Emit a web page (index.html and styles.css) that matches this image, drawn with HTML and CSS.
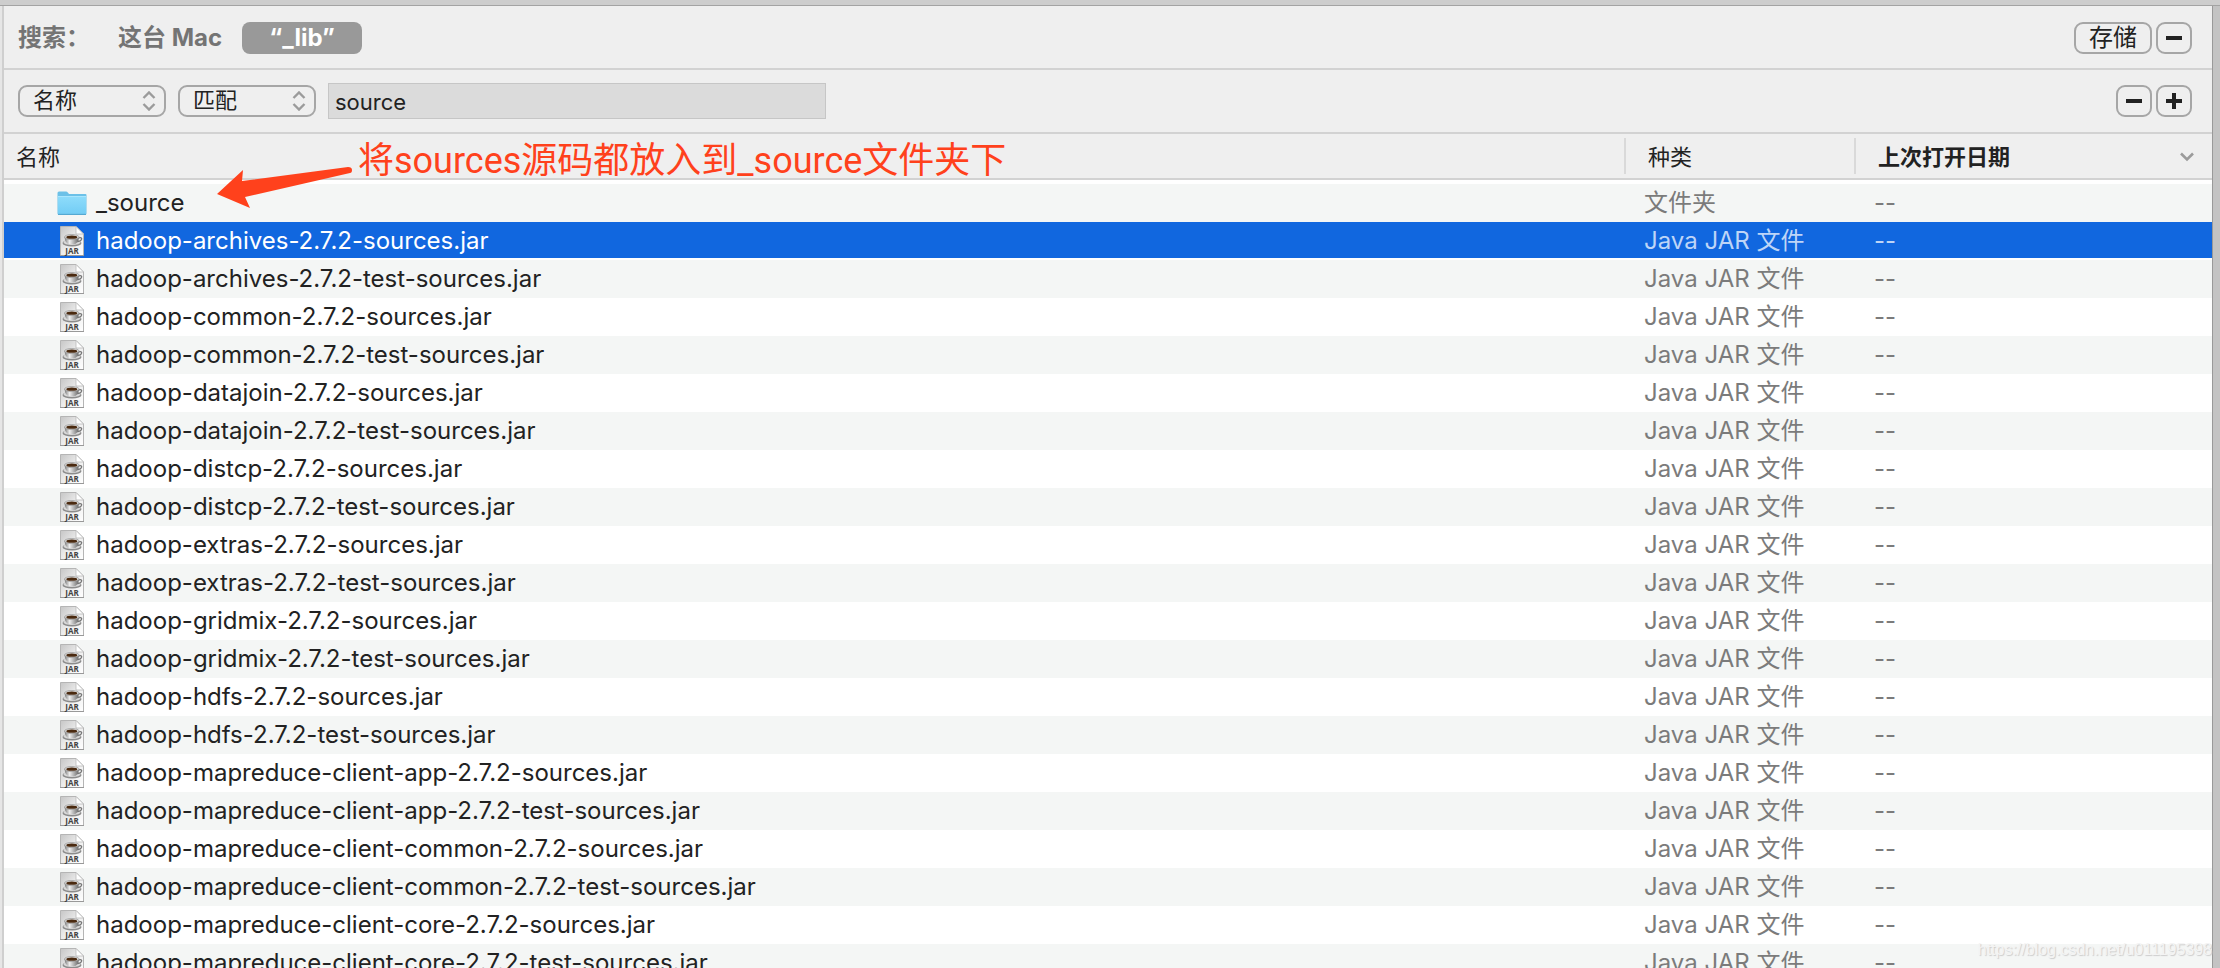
FILE: index.html
```html
<!DOCTYPE html>
<html lang="zh-CN">
<head>
  <meta charset="UTF-8">
  <meta name="viewport" content="width=device-width, initial-scale=1.0">
  <title>_lib</title>
  <link rel="stylesheet" href="styles.css">
</head>
<body>

  <!-- 图标 -->
  <svg class="icons" width="0" height="0">
    <defs>
      <linearGradient id="paper" x1="0" y1="0" x2="1" y2="1">
        <stop offset="0" stop-color="#c6c6c6"/>
        <stop offset=".5" stop-color="#ececec"/>
        <stop offset="1" stop-color="#fff"/>
      </linearGradient>
      <linearGradient id="cup" x1="0" y1="0" x2="1" y2="0">
        <stop offset="0" stop-color="#777"/>
        <stop offset=".35" stop-color="#eee"/>
        <stop offset="1" stop-color="#666"/>
      </linearGradient>
      <linearGradient id="blue" x1="0" y1="0" x2="0" y2="1">
        <stop offset="0" stop-color="#8edcfb"/>
        <stop offset="1" stop-color="#73cdf5"/>
      </linearGradient>
    </defs>
    <symbol id="folder" viewBox="0 0 30 30">
      <path d="M.5 5Q.5 3.500 2 3.500H9Q10 3.500 11 4.800L12 6H28.500Q29.500 6 29.500 7V25.500Q29.500 26.500 28.500 26.500H1.500Q.5 26.500 .5 25.500Z" fill="#6cc1e8"/>
      <path d="M1 8.500H29V25.500H1Z" fill="url(#blue)"/>
      <path d="M1 8.500H29" stroke="#a9e6fd"/>
      <path d="M1 26.500H29" stroke="#55a9d2"/>
    </symbol>
    <symbol id="jar" viewBox="0 0 30 30">
      <path d="M3.500 .5H19L26.500 8V29.500H3.500Z" fill="url(#paper)" stroke="#b5b5b5"/>
      <path d="M19 .5V8H26.500Z" fill="#fff" stroke="#b9b9b9" stroke-width=".8"/>
      <path d="M3 29.500H27" stroke="#999"/>
      <ellipse cx="15" cy="17" rx="9.500" ry="3.600" fill="#8b8b8b"/>
      <ellipse cx="15" cy="16.300" rx="8.500" ry="2.800" fill="#d8d8d8"/>
      <path d="M21 12Q25.500 11 24.500 13.500Q23.500 15.500 20 15.500" fill="none" stroke="#777" stroke-width="1.300"/>
      <path d="M7.500 11Q8 18 13 18.300H16.500Q21.500 18 22 11Z" fill="url(#cup)"/>
      <ellipse cx="14.800" cy="11" rx="7.300" ry="2.500" fill="#ddd" stroke="#888" stroke-width=".6"/>
      <ellipse cx="14.800" cy="11.200" rx="5.500" ry="1.600" fill="#4a2a10"/>
      <text x="15" y="28" class="jar-text">JAR</text>
    </symbol>
    <symbol id="updown" viewBox="0 0 14 20">
      <path d="M1.500 7L7 1.500L12.500 7M1.500 13L7 18.500L12.500 13" fill="none" stroke="#9b9b9b" stroke-width="2.400"/>
    </symbol>
  </svg>

  <div class="titlebar"></div>
  <div class="wrap">
    <div class="window">

      <div class="bar scope">
        <span class="label">搜索：</span>
        <button class="place">这台 Mac</button>
        <button class="place active">“_lib”</button>
        <div class="right">
          <button class="btn save">存储</button>
          <button class="btn" aria-label="删除"><svg width="16" height="16"><path d="M0 8H16" stroke="#222" stroke-width="4"/></svg></button>
        </div>
      </div>

      <div class="bar filter">
        <div class="select">
          <select class="attr" aria-label="属性"><option>名称</option></select>
          <svg><use href="#updown"/></svg>
        </div>
        <div class="select">
          <select class="match" aria-label="条件"><option>匹配</option></select>
          <svg><use href="#updown"/></svg>
        </div>
        <input class="keyword" type="text" value="source" aria-label="关键字">
        <div class="right">
          <button class="btn" aria-label="减少条件"><svg width="16" height="16"><path d="M0 8H16" stroke="#222" stroke-width="4"/></svg></button>
          <button class="btn" aria-label="增加条件"><svg width="16" height="16"><path d="M0 8H16M8 0V16" stroke="#222" stroke-width="4"/></svg></button>
        </div>
      </div>

      <table class="list">
        <thead>
          <tr>
            <th class="name"><div>名称</div></th>
            <th class="kind"><div>种类</div></th>
            <th class="date"><div>上次打开日期<svg width="14" height="10"><path d="M1 1.500L7 7.500L13 1.500" fill="none" stroke="#9b9b9b" stroke-width="2.600"/></svg></div></th>
          </tr>
        </thead>
        <tbody>
          <tr><td><div><svg><use href="#folder"/></svg>_source</div></td><td>文件夹</td><td>--</td></tr>
          <tr class="selected"><td><div><svg><use href="#jar"/></svg>hadoop-archives-2.7.2-sources.jar</div></td><td>Java JAR 文件</td><td>--</td></tr>
          <tr><td><div><svg><use href="#jar"/></svg>hadoop-archives-2.7.2-test-sources.jar</div></td><td>Java JAR 文件</td><td>--</td></tr>
          <tr><td><div><svg><use href="#jar"/></svg>hadoop-common-2.7.2-sources.jar</div></td><td>Java JAR 文件</td><td>--</td></tr>
          <tr><td><div><svg><use href="#jar"/></svg>hadoop-common-2.7.2-test-sources.jar</div></td><td>Java JAR 文件</td><td>--</td></tr>
          <tr><td><div><svg><use href="#jar"/></svg>hadoop-datajoin-2.7.2-sources.jar</div></td><td>Java JAR 文件</td><td>--</td></tr>
          <tr><td><div><svg><use href="#jar"/></svg>hadoop-datajoin-2.7.2-test-sources.jar</div></td><td>Java JAR 文件</td><td>--</td></tr>
          <tr><td><div><svg><use href="#jar"/></svg>hadoop-distcp-2.7.2-sources.jar</div></td><td>Java JAR 文件</td><td>--</td></tr>
          <tr><td><div><svg><use href="#jar"/></svg>hadoop-distcp-2.7.2-test-sources.jar</div></td><td>Java JAR 文件</td><td>--</td></tr>
          <tr><td><div><svg><use href="#jar"/></svg>hadoop-extras-2.7.2-sources.jar</div></td><td>Java JAR 文件</td><td>--</td></tr>
          <tr><td><div><svg><use href="#jar"/></svg>hadoop-extras-2.7.2-test-sources.jar</div></td><td>Java JAR 文件</td><td>--</td></tr>
          <tr><td><div><svg><use href="#jar"/></svg>hadoop-gridmix-2.7.2-sources.jar</div></td><td>Java JAR 文件</td><td>--</td></tr>
          <tr><td><div><svg><use href="#jar"/></svg>hadoop-gridmix-2.7.2-test-sources.jar</div></td><td>Java JAR 文件</td><td>--</td></tr>
          <tr><td><div><svg><use href="#jar"/></svg>hadoop-hdfs-2.7.2-sources.jar</div></td><td>Java JAR 文件</td><td>--</td></tr>
          <tr><td><div><svg><use href="#jar"/></svg>hadoop-hdfs-2.7.2-test-sources.jar</div></td><td>Java JAR 文件</td><td>--</td></tr>
          <tr><td><div><svg><use href="#jar"/></svg>hadoop-mapreduce-client-app-2.7.2-sources.jar</div></td><td>Java JAR 文件</td><td>--</td></tr>
          <tr><td><div><svg><use href="#jar"/></svg>hadoop-mapreduce-client-app-2.7.2-test-sources.jar</div></td><td>Java JAR 文件</td><td>--</td></tr>
          <tr><td><div><svg><use href="#jar"/></svg>hadoop-mapreduce-client-common-2.7.2-sources.jar</div></td><td>Java JAR 文件</td><td>--</td></tr>
          <tr><td><div><svg><use href="#jar"/></svg>hadoop-mapreduce-client-common-2.7.2-test-sources.jar</div></td><td>Java JAR 文件</td><td>--</td></tr>
          <tr><td><div><svg><use href="#jar"/></svg>hadoop-mapreduce-client-core-2.7.2-sources.jar</div></td><td>Java JAR 文件</td><td>--</td></tr>
          <tr><td><div><svg><use href="#jar"/></svg>hadoop-mapreduce-client-core-2.7.2-test-sources.jar</div></td><td>Java JAR 文件</td><td>--</td></tr>
        </tbody>
      </table>
    </div>
  </div>

  <!-- 标注 -->
  <svg class="arrow" width="140" height="42" viewBox="0 0 140 42">
    <path d="M1 28L27 4L26 15L132 1Q136 1 136 4Q136 7 134 7L29 31L34 42Z" fill="#ff411c"/>
  </svg>
  <p class="note">将sources源码都放入到_source文件夹下</p>
  <p class="watermark">https://blog.csdn.net/u011195398</p>

</body>
</html>
```
FILE: styles.css
```css
* {
  margin: 0;
  padding: 0;
  box-sizing: border-box;
}

body {
  position: relative;
  height: 100vh;
  overflow: hidden;
  display: flex;
  flex-direction: column;
  background-color: #c3c3c3;
  color: #222;
  font-family: Inter, "Noto Sans CJK SC", sans-serif;
  font-size: 24px;
}

button, select, input {
  font-family: inherit;
  color: inherit;
}

.icons {
  position: absolute;
}

.jar-text {
  font-family: "Open Sans", sans-serif;
  font-size: 8px;
  font-weight: 700;
  text-anchor: middle;
  fill: #444;
}

.titlebar {
  height: 6px;
  flex: none;
  background-color: #cdcdcd;
  border-bottom: 1px solid #a3a3a3;
}

.wrap {
  flex: 1;
  min-height: 0;
  padding-right: 7px;
  border-left: 2px solid #e6e6e6;
}

.window {
  height: 100%;
  overflow: hidden;
  background-color: #fff;
  border-left: 2px solid #cfcfcf;
  border-right: 1px solid #999;
}

/* 搜索栏 */
.bar {
  height: 64px;
  display: flex;
  align-items: center;
  padding: 0 20px 0 14px;
  background-color: #efefef;
  border-bottom: 2px solid #d2d2d2;
}

.scope {
  padding-top: 2px;
}

.label,
.place {
  font-size: 24px;
  font-weight: 700;
  line-height: 32px;
  color: #747474;
}

.label {
  margin-right: 28px;
}

.place {
  border: none;
  background: none;
  margin-right: 20px;
}

.place.active {
  width: 120px;
  height: 32px;
  border-radius: 8px;
  background-color: #999;
  color: #fff;
}

.right {
  margin-left: auto;
  display: flex;
  gap: 4px;
}

.btn {
  width: 36px;
  height: 32px;
  border: 2px solid #a6a6a6;
  border-radius: 9px;
  background: none;
  font-size: 24px;
  line-height: 28px;
  display: flex;
  justify-content: center;
  align-items: center;
}

.save {
  width: 78px;
}

.filter {
  gap: 12px;
}

.select {
  position: relative;
}

.select select {
  display: block;
  appearance: none;
  width: 148px;
  height: 32px;
  padding: 0 0 2px 13px;
  border: 2px solid #a6a6a6;
  border-radius: 9px;
  background: none;
  font-size: 22px;
  line-height: 26px;
}

.select .match {
  width: 138px;
}

.select svg {
  position: absolute;
  top: 6px;
  right: 10px;
  width: 14px;
  height: 20px;
  pointer-events: none;
}

.keyword {
  width: 498px;
  height: 36px;
  padding: 2px 6px 0;
  border: 1px solid #c6c6c6;
  background-color: #dbdbdb;
  font-size: 22px;
}

/* 文件列表 */
.list {
  width: 100%;
  table-layout: fixed;
  border-collapse: separate;
  border-spacing: 0;
}

th {
  height: 46px;
  padding: 0;
  background-color: #efefef;
  border-bottom: 2px solid #d2d2d2;
  text-align: left;
  font-size: 22px;
  font-weight: 400;
}

th div {
  height: 36px;
  display: flex;
  align-items: center;
  justify-content: space-between;
  padding: 0 18px 2px 22px;
  border-left: 2px solid #d9d9d9;
}

th svg {
  margin-top: 4px;
}

.name div {
  padding-left: 12px;
  border-left: none;
}

.kind {
  width: 230px;
}

.date {
  width: 358px;
  font-weight: 700;
}

tbody::before {
  content: "";
  display: block;
  height: 4px;
}

td {
  height: 38px;
  padding: 0 0 0 20px;
  line-height: 38px;
  font-size: 24px;
  color: #7b7b7b;
  white-space: nowrap;
}

td:first-child {
  padding-left: 53px;
  color: #222;
}

td div {
  display: flex;
  align-items: center;
  gap: 9px;
  height: 38px;
}

td svg {
  width: 30px;
  height: 30px;
}

tbody tr:nth-child(odd) {
  background-color: #f4f6f5;
}

tbody .selected {
  background: linear-gradient(#1167df 36px, #fff 36px);
}

.selected td {
  color: #bed5f7;
}

.selected td:first-child {
  color: #fff;
}

/* 标注 */
.arrow {
  position: absolute;
  left: 216px;
  top: 166px;
}

.note {
  position: absolute;
  left: 358px;
  top: 136px;
  font-family: Roboto, "Noto Sans CJK SC", sans-serif;
  font-size: 36px;
  line-height: 50px;
  color: #ff411c;
}

.watermark {
  position: absolute;
  right: 8px;
  bottom: 8px;
  font-family: "Liberation Sans", sans-serif;
  font-size: 16px;
  line-height: 20px;
  color: #f4f4f4;
  text-shadow: 1px 1px 1px #ccc;
}
```
